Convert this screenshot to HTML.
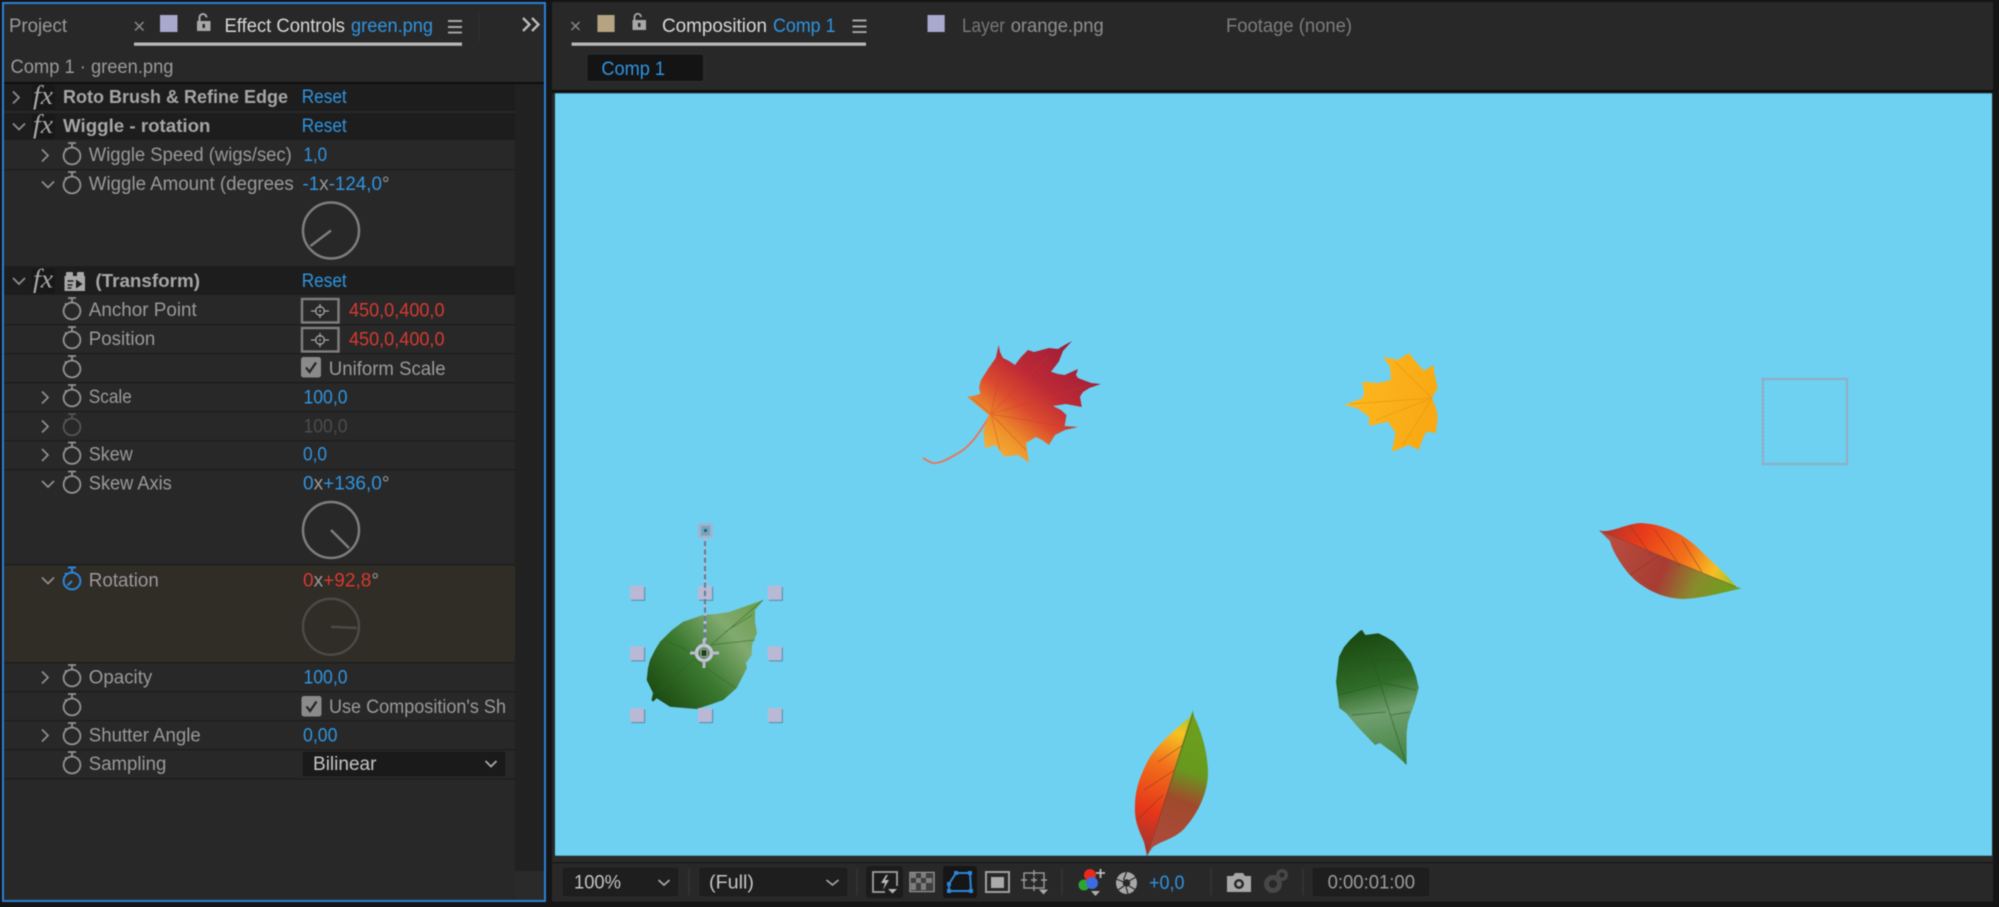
<!DOCTYPE html>
<html lang="en"><head><meta charset="utf-8"><title>Effect Controls</title>
<style>
html,body{margin:0;padding:0;background:#151515;width:1999px;height:907px;overflow:hidden}
svg{display:block;position:absolute;left:0;top:0;filter:blur(.6px)}
text{font-family:"Liberation Sans",sans-serif;font-size:19px;fill:#9a9a9a}
.b{fill:#2f94e0}.r{fill:#d63a30}.w{fill:#d8d8d8}.h{font-weight:bold;fill:#a6a6a6;font-size:18.5px}.d{fill:#777}.o{fill:#4c4c4c}
</style></head><body>
<svg width="1999" height="907" viewBox="0 0 1999 907" xmlns="http://www.w3.org/2000/svg">
<defs>
<g id="sw" fill="none" stroke="#929292" stroke-width="1.8"><circle cx="0" cy="1.5" r="8.4"/><path d="M0-7v-4M-4-11.500h8M-7-6l2 1.600"/></g>
<path id="cr" d="M-3-6L3 0L-3 6" fill="none" stroke="#8f8f8f" stroke-width="1.7"/>
<path id="ce" d="M-6-3L0 3L6-3" fill="none" stroke="#8f8f8f" stroke-width="1.7"/>
<g id="fx"><rect x="-1" y="-12" width="23" height="25" fill="#181818"/><text x="0" y="7" style="font-family:'Liberation Serif',serif;font-style:italic;font-size:26px;fill:#a8a8a8" textLength="20" lengthAdjust="spacingAndGlyphs">fx</text></g>
<g id="ap"><rect x="0" y="0" width="36.500" height="23.500" fill="none" stroke="#7f7f7f" stroke-width="2.400"/><circle cx="18" cy="12" r="4.300" fill="none" stroke="#a5a5a5" stroke-width="1.300"/><path d="M9 12h5M22 12h5M18 5v4M18 15v4" stroke="#a5a5a5" stroke-width="1.300"/><circle cx="18" cy="12" r="1" fill="#a5a5a5"/></g>
<g id="cb"><rect x="0" y="0" width="20" height="20.500" rx="2.500" fill="#8a8a8a"/><path d="M5 10.500l3.600 4.500L15 5.500" fill="none" stroke="#232323" stroke-width="2.200"/></g>
<g id="hm" stroke="#a8a8a8" stroke-width="1.900"><path d="M0 0h14M0 6h14M0 11.600h14"/></g>
<g id="hd"><rect x="-7" y="-7" width="14" height="14" fill="#5d93ae" transform="translate(1.200,1.200)"/><rect x="-7" y="-7" width="14" height="14" fill="#b9b9d6"/></g>
<linearGradient id="mr" gradientUnits="userSpaceOnUse" x1="1070" y1="350" x2="990" y2="450"><stop offset="0" stop-color="#a01e38"/><stop offset=".35" stop-color="#bd2a36"/><stop offset=".58" stop-color="#db4a2e"/><stop offset=".82" stop-color="#ee922a"/><stop offset="1" stop-color="#f3ad38"/></linearGradient>
<linearGradient id="mo" gradientUnits="userSpaceOnUse" x1="1350" y1="400" x2="1430" y2="420"><stop offset="0" stop-color="#fdb71f"/><stop offset="1" stop-color="#f8a914"/></linearGradient>
<linearGradient id="l1a" gradientUnits="userSpaceOnUse" x1="1610" y1="525" x2="1730" y2="585"><stop offset="0" stop-color="#b8342b"/><stop offset=".25" stop-color="#e93b1a"/><stop offset=".6" stop-color="#f2701b"/><stop offset=".85" stop-color="#f7c025"/><stop offset="1" stop-color="#a3c42a"/></linearGradient>
<linearGradient id="l1b" gradientUnits="userSpaceOnUse" x1="1610" y1="545" x2="1730" y2="595"><stop offset="0" stop-color="#b84c3e"/><stop offset=".45" stop-color="#a83c34"/><stop offset=".72" stop-color="#8a8a2c"/><stop offset="1" stop-color="#6da11d"/></linearGradient>
<linearGradient id="l2a" gradientUnits="userSpaceOnUse" x1="1190" y1="715" x2="1140" y2="845"><stop offset="0" stop-color="#a8c52a"/><stop offset=".15" stop-color="#f6c323"/><stop offset=".4" stop-color="#f2701b"/><stop offset=".75" stop-color="#e6361a"/><stop offset="1" stop-color="#a8352c"/></linearGradient>
<linearGradient id="l2b" gradientUnits="userSpaceOnUse" x1="1195" y1="715" x2="1150" y2="845"><stop offset="0" stop-color="#6da11d"/><stop offset=".4" stop-color="#68991f"/><stop offset=".62" stop-color="#a04a2c"/><stop offset="1" stop-color="#ae4a3c"/></linearGradient>
<linearGradient id="g1" gradientUnits="userSpaceOnUse" x1="1365" y1="635" x2="1395" y2="760"><stop offset="0" stop-color="#1b4a12"/><stop offset=".38" stop-color="#2f6b28"/><stop offset=".62" stop-color="#6f9f6e"/><stop offset="1" stop-color="#468545"/></linearGradient>
<linearGradient id="g2" gradientUnits="userSpaceOnUse" x1="655" y1="695" x2="755" y2="610"><stop offset="0" stop-color="#1d4c13"/><stop offset=".4" stop-color="#3c7a30"/><stop offset=".75" stop-color="#82aa70"/><stop offset="1" stop-color="#6f9f52"/></linearGradient>
</defs>

<rect width="1999" height="907" fill="#151515"/>

<!-- LEFT PANEL -->
<rect x="3" y="3" width="542" height="898" fill="#282828"/>
<rect x="515" y="84" width="29" height="787" fill="#212121"/>
<rect x="4" y="82" width="540" height="2" fill="#0e0e0e"/>
<rect x="3" y="3" width="542" height="898" fill="none" stroke="#2b7fd6" stroke-width="2"/>
<path d="M479 10v32" stroke="#2e2e2e" stroke-width="1.500"/>

<text x="9" y="32" textLength="58" lengthAdjust="spacingAndGlyphs" fill="#8f8f8f">Project</text>
<path d="M135 22l8.500 8.500M143.500 22l-8.500 8.500" stroke="#8c8c8c" stroke-width="1.500"/>
<rect x="160" y="15" width="17.500" height="17" fill="#a9a8cf"/>
<g fill="none" stroke="#a8a8a8" stroke-width="2"><path d="M199.500 21v-3.500a3.500 3.500 0 0 1 7 0"/></g><rect x="197" y="21" width="13.500" height="10" fill="#a8a8a8"/><rect x="202.500" y="24" width="2.500" height="4" fill="#282828"/>
<text class="w" x="224.500" y="32" textLength="120.500" lengthAdjust="spacingAndGlyphs">Effect Controls</text>
<text class="b" x="351" y="32" textLength="82" lengthAdjust="spacingAndGlyphs">green.png</text>
<use href="#hm" x="448" y="21"/>
<rect x="134" y="42.500" width="328" height="3.300" fill="#b8b8b8"/>
<path d="M523 18l6.500 6.500L523 31M532 18l6.500 6.500L532 31" fill="none" stroke="#bdbdbd" stroke-width="2.300"/>
<text x="10.500" y="73" textLength="163" lengthAdjust="spacingAndGlyphs">Comp 1 · green.png</text>

<!-- rows bg -->
<g fill="#1d1d1d">
<rect x="4" y="84" width="511" height="27"/><rect x="4" y="113" width="511" height="27"/><rect x="4" y="266" width="511" height="29"/>
</g>
<rect x="4" y="565" width="511" height="97" fill="#302c26"/>
<g fill="#1e1e1e">
<rect x="4" y="169" width="511" height="1.500"/><rect x="4" y="324" width="511" height="1.500"/><rect x="4" y="353" width="511" height="1.500"/><rect x="4" y="382" width="511" height="1.500"/><rect x="4" y="411" width="511" height="1.500"/><rect x="4" y="440" width="511" height="1.500"/><rect x="4" y="469" width="511" height="1.500"/><rect x="4" y="564" width="511" height="1.500"/><rect x="4" y="662" width="511" height="1.500"/><rect x="4" y="691" width="511" height="1.500"/><rect x="4" y="720" width="511" height="1.500"/><rect x="4" y="749" width="511" height="1.500"/><rect x="4" y="778" width="511" height="1.500"/>
</g>

<!-- effect headers -->
<use href="#cr" x="16" y="97.500"/><use href="#fx" x="33" y="97"/>
<text class="h" x="63" y="103" textLength="225" lengthAdjust="spacingAndGlyphs">Roto Brush &amp; Refine Edge</text>
<text class="b" x="301.700" y="103" textLength="45" lengthAdjust="spacingAndGlyphs">Reset</text>

<use href="#ce" x="19" y="126.500"/><use href="#fx" x="33" y="126"/>
<text class="h" x="63" y="132" textLength="147.500" lengthAdjust="spacingAndGlyphs">Wiggle - rotation</text>
<text class="b" x="301.700" y="132" textLength="45" lengthAdjust="spacingAndGlyphs">Reset</text>

<use href="#cr" x="45" y="155.500"/><use href="#sw" x="72" y="154.500"/>
<text x="88.800" y="161" textLength="203" lengthAdjust="spacingAndGlyphs">Wiggle Speed (wigs/sec)</text>
<text class="b" x="303.500" y="161" textLength="23.500" lengthAdjust="spacingAndGlyphs">1,0</text>

<use href="#ce" x="48" y="184.500"/><use href="#sw" x="72" y="183.500"/>
<text x="88.800" y="190" textLength="205" lengthAdjust="spacingAndGlyphs">Wiggle Amount (degrees</text>
<text x="302.500" y="190" textLength="87" lengthAdjust="spacingAndGlyphs"><tspan class="b">-1</tspan>x<tspan class="b">-124,0</tspan>°</text>
<circle cx="331" cy="230.500" r="28" fill="none" stroke="#7e7e7e" stroke-width="2.500"/><path d="M331 230.500L310.500 246" stroke="#7e7e7e" stroke-width="2.500"/>

<use href="#ce" x="19" y="281"/><use href="#fx" x="33" y="280.500"/>
<g><path d="M64.500 276h20.500v15h-20.500z" fill="#a8a8a8"/><rect x="66" y="272" width="7" height="5" rx="1" fill="#a8a8a8"/><rect x="77" y="272" width="7" height="5" rx="1" fill="#a8a8a8"/><path d="M67.500 281h6M67.500 285h5M67.500 288h4" stroke="#1d1d1d" stroke-width="1.500"/><path d="M76 279.500l6.500 4.500-6.500 4.500z" fill="#1d1d1d"/></g>
<text class="h" x="95.400" y="287" textLength="104.600" lengthAdjust="spacingAndGlyphs">(Transform)</text>
<text class="b" x="301.700" y="287" textLength="45" lengthAdjust="spacingAndGlyphs">Reset</text>

<use href="#sw" x="72" y="309.500"/>
<text x="88.800" y="316" textLength="108" lengthAdjust="spacingAndGlyphs">Anchor Point</text>
<use href="#ap" x="302" y="299"/>
<text class="r" x="349" y="316.500" textLength="95.500" lengthAdjust="spacingAndGlyphs">450,0,400,0</text>

<use href="#sw" x="72" y="338.500"/>
<text x="88.800" y="345" textLength="66.500" lengthAdjust="spacingAndGlyphs">Position</text>
<use href="#ap" x="302" y="328"/>
<text class="r" x="349" y="345.500" textLength="95.500" lengthAdjust="spacingAndGlyphs">450,0,400,0</text>

<use href="#sw" x="72" y="367.500"/>
<use href="#cb" x="301" y="357"/>
<text x="328.800" y="375" textLength="116.800" lengthAdjust="spacingAndGlyphs">Uniform Scale</text>

<use href="#cr" x="45" y="397.500"/><use href="#sw" x="72" y="396.500"/>
<text x="88.800" y="403" textLength="43" lengthAdjust="spacingAndGlyphs">Scale</text>
<text class="b" x="303.500" y="403.500" textLength="44" lengthAdjust="spacingAndGlyphs">100,0</text>

<use href="#cr" x="45" y="426.500"/><g opacity=".42"><use href="#sw" x="72" y="425.500"/></g>
<text class="o" x="303.500" y="432.500" textLength="44" lengthAdjust="spacingAndGlyphs">100,0</text>

<use href="#cr" x="45" y="455"/><use href="#sw" x="72" y="454"/>
<text x="88.800" y="460.500" textLength="44" lengthAdjust="spacingAndGlyphs">Skew</text>
<text class="b" x="303" y="460.500" textLength="24" lengthAdjust="spacingAndGlyphs">0,0</text>

<use href="#ce" x="48" y="484"/><use href="#sw" x="72" y="483"/>
<text x="88.800" y="489.500" textLength="83" lengthAdjust="spacingAndGlyphs">Skew Axis</text>
<text x="303" y="489.500" textLength="86.500" lengthAdjust="spacingAndGlyphs"><tspan class="b">0</tspan>x<tspan class="b">+136,0</tspan>°</text>
<circle cx="331" cy="530" r="28" fill="none" stroke="#7e7e7e" stroke-width="2.500"/><path d="M331 530L349 548" stroke="#7e7e7e" stroke-width="2.500"/>

<use href="#ce" x="48" y="580.500"/>
<g fill="none" stroke="#2b86dc" stroke-width="2"><circle cx="72" cy="581" r="8.400"/><path d="M72 572v-4M68 567.500h8M72 581l-4.500 4.500M65 573l2 1.600"/></g>
<text x="88.800" y="586.500" textLength="70" lengthAdjust="spacingAndGlyphs">Rotation</text>
<text x="303" y="586.500" textLength="76" lengthAdjust="spacingAndGlyphs"><tspan class="r">0</tspan>x<tspan class="r">+92,8</tspan>°</text>
<circle cx="331" cy="626.700" r="28" fill="none" stroke="#4c4a47" stroke-width="2.500"/><path d="M331 626.700L357 628" stroke="#4c4a47" stroke-width="2.500"/>

<use href="#cr" x="45" y="677.500"/><use href="#sw" x="72" y="676.500"/>
<text x="88.800" y="683.500" textLength="63.500" lengthAdjust="spacingAndGlyphs">Opacity</text>
<text class="b" x="303.500" y="683.500" textLength="44" lengthAdjust="spacingAndGlyphs">100,0</text>

<use href="#sw" x="72" y="705.500"/>
<use href="#cb" x="301.500" y="696"/>
<text x="329" y="713" textLength="177" lengthAdjust="spacingAndGlyphs">Use Composition's Sh</text>

<use href="#cr" x="45" y="735.500"/><use href="#sw" x="72" y="734.500"/>
<text x="88.800" y="741.500" textLength="112" lengthAdjust="spacingAndGlyphs">Shutter Angle</text>
<text class="b" x="303" y="741.500" textLength="34.500" lengthAdjust="spacingAndGlyphs">0,00</text>

<use href="#sw" x="72" y="763.500"/>
<text x="88.800" y="770" textLength="77.500" lengthAdjust="spacingAndGlyphs">Sampling</text>
<rect x="302" y="751" width="204" height="26" fill="#1a1a1a" stroke="#2c2c2c"/>
<text x="313" y="770" textLength="63.500" lengthAdjust="spacingAndGlyphs" style="fill:#c4c4c4">Bilinear</text>
<path d="M485.500 761l5.500 5.500 5.500-5.500" fill="none" stroke="#aaa" stroke-width="1.800"/>

<!-- RIGHT PANEL -->
<rect x="552" y="2" width="1441" height="900" fill="#282828"/>
<rect x="552" y="90" width="1441" height="3" fill="#0f0f0f"/>
<path d="M571.500 22l8 8M579.500 22l-8 8" stroke="#8c8c8c" stroke-width="1.400"/>
<rect x="597.400" y="15" width="17.200" height="17" fill="#b5a382"/>
<g fill="none" stroke="#a8a8a8" stroke-width="1.800"><path d="M634.500 20v-3a3.200 3.200 0 0 1 6.500 0"/></g><rect x="632.500" y="20" width="13.500" height="10" fill="#a8a8a8"/><rect x="638" y="23" width="2.500" height="4" fill="#282828"/>
<text class="w" x="662" y="32" textLength="105" lengthAdjust="spacingAndGlyphs">Composition</text>
<text class="b" x="773" y="32" textLength="62.500" lengthAdjust="spacingAndGlyphs">Comp 1</text>
<use href="#hm" x="852.500" y="20.500"/>
<rect x="571.600" y="42.500" width="294.400" height="3.300" fill="#b8b8b8"/>
<rect x="927.500" y="15" width="17.200" height="17" fill="#a9a8cf"/>
<text class="d" x="962" y="32" textLength="43" lengthAdjust="spacingAndGlyphs">Layer</text>
<text x="1010.700" y="32" textLength="93" lengthAdjust="spacingAndGlyphs" style="fill:#8f8f8f">orange.png</text>
<text class="d" x="1226" y="32" textLength="126" lengthAdjust="spacingAndGlyphs" style="fill:#7d7d7d">Footage (none)</text>
<rect x="587" y="54" width="116.600" height="27.500" rx="2" fill="#141414" stroke="#2e2e2e"/>
<text class="b" x="601.400" y="75" textLength="63.600" lengthAdjust="spacingAndGlyphs">Comp 1</text>

<!-- CANVAS -->
<rect x="555" y="93" width="1437" height="762.700" fill="#6ed1f2"/>
<rect x="555" y="93" width="1437" height="1" fill="#54a5c2"/>

<!-- red maple -->
<path d="M991 414C980 432 970 448 955 455C945 461 935 465 930 462L923 458" fill="none" stroke="#e27a5e" stroke-width="2"/>
<path d="M967 396.700L973 396L980.400 394L979 387L981 380L988 369L995.700 358L998.700 345L1000 352L1003 358L1009 361L1015 365L1021 357L1028 350L1034 352L1049 348L1058 349L1064.600 345L1072 341L1063 351L1058.800 361.700L1051 371.700L1058 374L1064.600 375L1078 369L1076 375L1078 378L1091 383L1101 384L1089.400 388L1083 392L1080 396.700L1081.800 407L1066 404L1053 406L1061 410L1066.500 415L1064.600 426L1078 427L1065 430L1055 435L1049 445L1042 440L1035.900 437L1026 443L1029 462.700L1018.600 455L1004 456.700L995.700 445L985 448.300L983.400 431.700L988.800 415Z" fill="url(#mr)"/>
<g fill="none" stroke="#d8342c" stroke-width=".9" opacity=".4"><path d="M991 414L1003 358M991 414L1049 355M991 414L1090 385M991 414L1060 426M991 414L1026 450M991 414L1000 450M991 414L972 398"/></g>

<!-- orange maple -->
<path d="M1344 405L1363 398L1364 390L1362 381.700L1378 383L1391 380L1390 366.700L1383 356.700L1397.500 360L1409 353L1416 362L1424 370.700L1433 365L1435 376L1437.700 388L1432 398L1436 408L1437.700 416.700L1436 433L1426 431.700L1422 441L1418.600 450L1409 445L1391.800 451.700L1395.600 433L1388 421.700L1369 426L1369 416.700L1357 408Z" fill="url(#mo)"/>
<g fill="none" stroke="#e8940e" stroke-width=".9" opacity=".7"><path d="M1432 398L1350 404M1432 398L1395 362M1432 398L1403 445M1432 398L1376 420"/></g>

<!-- red-green leaf -->
<path d="M1599.500 530.700C1612 533 1625 524 1640 523C1665 524 1685 535 1700 550C1715 565 1728 575 1736 586.700Z" fill="url(#l1a)"/>
<path d="M1599.500 530.700L1736 586.700L1741.800 588.300C1725 592 1705 598 1684 599C1665 599 1648 591 1635 580C1622 568 1612 550 1610 541Z" fill="url(#l1b)"/>
<g fill="none" stroke="#8a3320" stroke-width="1" opacity=".5"><path d="M1599.500 530.700L1736 586.700M1630 526L1652 556M1655 530L1680 566M1682 540L1702 572M1630 575L1660 555"/></g>

<!-- green center -->
<path d="M1359.700 631L1362 630L1365.400 635L1378.400 633.300L1386 637L1393.600 641.700L1403 652L1411 663L1416 676L1418.700 688L1415 702L1411 713L1408 722L1406.600 733L1406.600 765L1395 754L1385 746.700L1380 743L1375 745L1365.400 735L1356 725L1346 713L1339.300 708L1336 681.700L1339 656.700L1344 647L1350 640Z" fill="url(#g1)"/>
<g fill="none" stroke="#234f1d" stroke-width="1" opacity=".5"><path d="M1365 636L1406 764M1372 665L1345 650M1378 685L1338 695M1386 712L1352 715M1375 660L1408 660M1383 683L1416 690M1391 715L1410 712"/></g>

<!-- bottom-left leaf -->
<path d="M1192.800 715C1180 725 1160 742 1150 757C1140 775 1135 790 1135 805C1134 822 1140 832 1144 842L1147 855.700Z" fill="url(#l2a)"/>
<path d="M1192.800 710L1194 716C1203 735 1208 755 1208 775C1207 795 1197 815 1183 830C1172 840 1158 842 1152 848L1147 855.700Z" fill="url(#l2b)"/>
<g fill="none" stroke="#8a3320" stroke-width="1" opacity=".5"><path d="M1193 714L1147 855.700M1183 745L1158 762M1175 770L1144 790M1163 795L1137 820"/></g>

<!-- selected green leaf -->
<path d="M763.300 600L755 610L755 622L757 633L752 645L751.700 655L746 663L747 668L736.700 688L723.300 700L712 704L696.700 709L670 706.700L656.700 698.300L653 701.700L651.500 700L653 693L646.700 680L648 668L650 660L655 650L660 641.700L672 630L683 621.700L703 615L716 614L730 611.700Z" fill="url(#g2)"/>
<g fill="none" stroke="#2d5f24" stroke-width="1" opacity=".5"><path d="M653 695L763 600M697 655L665 640M680 670L662 690M710 645L755 640M725 632L752 615M695 660L735 688"/></g>

<!-- dotted square -->
<rect x="1763" y="379" width="84" height="85" fill="none" stroke="#8cb0c8" stroke-width="2.500" opacity=".7"/>
<rect x="1763" y="379" width="84" height="85" fill="none" stroke="#c08a94" stroke-width="1.200" stroke-dasharray="2 2" opacity=".7"/>

<!-- overlays -->
<use href="#hd" x="637" y="592.700"/><use href="#hd" x="705" y="592.700"/><use href="#hd" x="774.700" y="592.700"/>
<use href="#hd" x="637" y="653.300"/><use href="#hd" x="774.700" y="653.300"/>
<use href="#hd" x="637" y="715"/><use href="#hd" x="705" y="715"/><use href="#hd" x="774.700" y="715"/>
<path d="M705 538V645" stroke="#5d7f94" stroke-width="2"/><path d="M705 538V645" stroke="#b9b9d6" stroke-width="3" stroke-dasharray="3 5.300"/>
<rect x="699.500" y="524.500" width="12" height="12.500" fill="#6fa8c4" stroke="#aab2cc" stroke-width="2.500"/><rect x="704" y="529" width="3" height="3" fill="#3a5a70"/>
<circle cx="704" cy="653" r="7.500" fill="none" stroke="#c6c6d8" stroke-width="3.500"/><path d="M690 653h7M711 653h8M704 639v7M704 660v8" stroke="#b9b9d6" stroke-width="3"/><rect x="701" y="649.500" width="6" height="7" fill="#1f3f1a" stroke="#aab" stroke-width="1"/>

<!-- TOOLBAR -->
<rect x="552" y="856" width="1441" height="7" fill="#2a2a2a"/>
<rect x="552" y="862" width="1441" height="1.500" fill="#1a1a1a"/>
<rect x="552" y="901.700" width="1441" height="6" fill="#151515"/>
<rect x="562" y="867" width="117" height="30" rx="3" fill="#1e1e1e" stroke="#2c2c2c"/>
<text x="574" y="888.500" textLength="47" lengthAdjust="spacingAndGlyphs" style="fill:#c4c4c4">100%</text>
<path d="M658.500 880l5.500 5 5.500-5" fill="none" stroke="#aaa" stroke-width="1.600"/>
<rect x="688" y="869" width="2" height="26" fill="#333"/>
<rect x="698.500" y="867" width="149.500" height="30" rx="3" fill="#1e1e1e" stroke="#2c2c2c"/>
<text x="709" y="888.500" textLength="45" lengthAdjust="spacingAndGlyphs" style="fill:#c4c4c4">(Full)</text>
<path d="M826.500 880l6 5 6-5" fill="none" stroke="#aaa" stroke-width="1.600"/>
<rect x="856" y="869" width="2" height="26" fill="#333"/>

<rect x="866" y="866" width="37" height="32" rx="3" fill="#1c1c1c"/>
<path d="M885 892h-12v-20h24v14" fill="none" stroke="#a0a0a0" stroke-width="1.800"/>
<path d="M886 875l-5 8h4l-2 7 6-10h-4l3-5z" fill="#b8b8b8"/>
<path d="M888 889h9l-4.500 4.500z" fill="#b5b5b5"/>

<rect x="910" y="872.500" width="24" height="19" fill="none" stroke="#8f8f8f" stroke-width="1.500"/>
<g fill="#7e7e7e"><rect x="911" y="873" width="22" height="18" fill="#3e3e3e"/><rect x="911" y="873" width="5" height="5"/><rect x="921" y="873" width="5" height="5"/><rect x="916" y="878" width="5" height="5"/><rect x="926" y="878" width="6" height="5"/><rect x="911" y="883" width="5" height="7"/><rect x="921" y="883" width="5" height="7"/></g>

<rect x="943" y="866" width="34" height="32" rx="3" fill="#161616"/>
<path d="M956 873h14l1 18h-22l0-7z" fill="none" stroke="#2b86dc" stroke-width="2"/>
<g fill="#2b86dc"><rect x="954" y="871" width="4" height="4"/><rect x="968" y="871" width="4" height="4"/><rect x="969" y="889" width="4" height="4"/><rect x="947" y="889" width="4" height="4"/><rect x="947" y="882" width="4" height="4"/></g>

<rect x="986" y="872" width="23" height="20" fill="none" stroke="#a0a0a0" stroke-width="2"/><rect x="991" y="877" width="13" height="11" fill="#aaa"/>
<rect x="1024" y="873" width="20" height="15" fill="none" stroke="#9a9a9a" stroke-width="1.400"/>
<path d="M1021 880h6M1041 880h6M1034 870v6M1034 885v6M1031 880h6M1034 877v6" stroke="#9a9a9a" stroke-width="1.400"/>
<path d="M1039 889.500h9l-4.500 5z" fill="#a8a8a8"/>
<rect x="1061" y="869" width="2" height="26" fill="#333"/>

<circle cx="1084" cy="885" r="5.500" fill="#2fa531"/><circle cx="1090" cy="875" r="6" fill="#e8291f"/><circle cx="1092" cy="883" r="6" fill="#3d6be0"/>
<path d="M1096 873h9M1100.500 869v9" stroke="#bdbdbd" stroke-width="1.800"/>
<path d="M1091 891h9l-4.500 5z" fill="#b0b0b0"/>

<ellipse cx="1126.500" cy="883" rx="10.500" ry="11" fill="#a8a8a8"/><circle cx="1126.500" cy="883" r="3.800" fill="#282828"/>
<path d="M1126.500 872l-3 8M1136 877l-7 4M1136 890l-7-4M1128 894l-2-7M1118 890l6-4M1116 879l8 3" stroke="#282828" stroke-width="1.200"/>
<text class="b" x="1149" y="889" textLength="35.500" lengthAdjust="spacingAndGlyphs">+0,0</text>
<rect x="1210" y="869" width="2" height="26" fill="#333"/>

<path d="M1227 876h6l2-3h8l2 3h6v16h-24z" fill="#a8a8a8"/><circle cx="1239" cy="884" r="4.500" fill="#282828" stroke="#282828"/><circle cx="1239" cy="884" r="2.500" fill="#a8a8a8"/>
<g fill="#474747"><circle cx="1273" cy="884" r="9"/><circle cx="1282" cy="875" r="6"/></g><circle cx="1273" cy="884" r="4" fill="#282828"/><circle cx="1282" cy="875" r="2.500" fill="#282828"/>
<rect x="1302" y="869" width="2" height="26" fill="#333"/>

<rect x="1312" y="867" width="118" height="30" rx="3" fill="#1e1e1e" stroke="#2c2c2c"/>
<text x="1327.600" y="888.500" textLength="87.400" lengthAdjust="spacingAndGlyphs" style="fill:#9c9c9c">0:00:01:00</text>

<rect x="515" y="871" width="29" height="29" fill="#2a2a2a"/>
</svg>
</body></html>
